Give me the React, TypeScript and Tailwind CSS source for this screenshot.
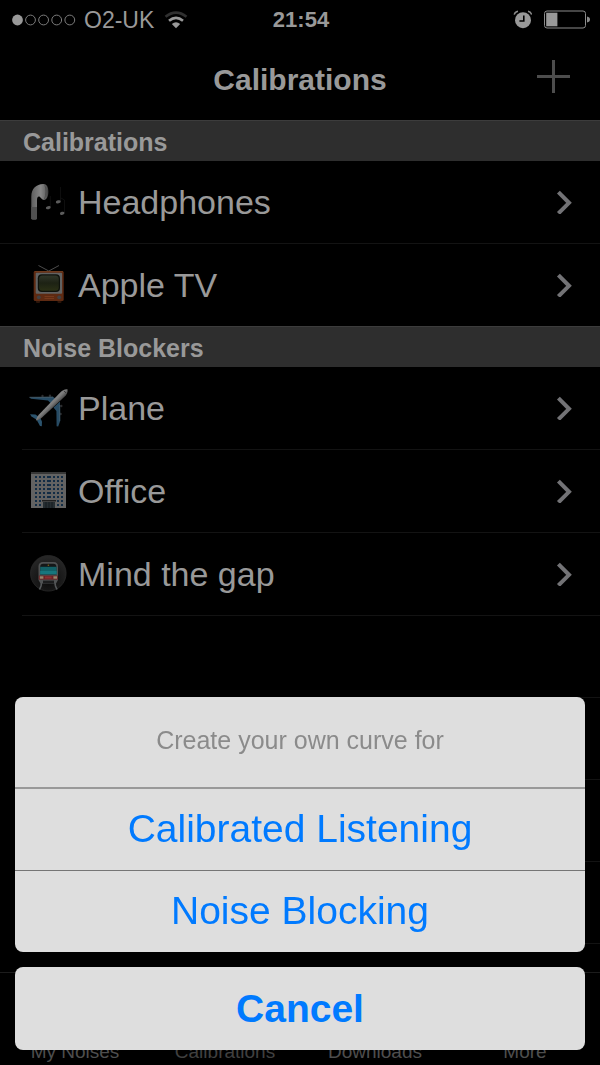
import type { ReactNode } from "react";

interface Curve {
    name: string;
    icon: ReactNode;
}

interface CurveSectionProps {
    title: string;
    curves: Curve[];
    inset?: boolean;
}

function EarbudIcon() {
    return (
        <svg viewBox="0 0 40 40" className="w-10 h-10 shrink-0" aria-hidden="true">
            <defs>
                <linearGradient id="bud" x1="0" x2="1" y1="0" y2="0">
                    <stop offset="0" stopColor="#5e5e5e" />
                    <stop offset="0.55" stopColor="#868686" />
                    <stop offset="0.8" stopColor="#6a6a6a" />
                    <stop offset="1" stopColor="#3a3a3a" />
                </linearGradient>
            </defs>
            <path d="M3.3 37V14.5C3.3 6.5 8.5 2.2 15 2C18.8 1.9 20.4 5 20.4 9.5C20.4 14.2 18.8 18 16 18C13.6 18 13 15.6 11.4 14.6C9.8 14.2 9 15.8 9 18.5V37Q6 38.2 3.3 37Z" fill="url(#bud)" />
            <path d="M3.3 25H9V37Q6 38.2 3.3 37Z" fill="#505050" />
            <path d="M16.8 3.2C18.4 6 18.4 13 16.4 17.4" stroke="#484848" strokeWidth="0.8" fill="none" />
            <g stroke="#0e0e0e" strokeWidth="1" fill="none">
                <path d="M22.3 25V14" />
                <path d="M32.5 19.5V5" />
                <path d="M36.5 31V18L33 16" />
            </g>
            <g fill="#5c5c5c">
                <ellipse cx="20.3" cy="25.7" rx="2.5" ry="1.5" transform="rotate(-15 20.3 25.7)" />
                <ellipse cx="30.3" cy="19.8" rx="2.5" ry="1.5" transform="rotate(-15 30.3 19.8)" />
                <ellipse cx="34.2" cy="31.3" rx="2.3" ry="1.5" transform="rotate(-15 34.2 31.3)" />
            </g>
        </svg>
    );
}

function TelevisionIcon() {
    return (
        <svg viewBox="0 0 40 40" className="w-10 h-10 shrink-0" aria-hidden="true">
            <defs>
                <linearGradient id="screen" x1="0" x2="0" y1="0" y2="1">
                    <stop offset="0" stopColor="#303629" />
                    <stop offset="0.5" stopColor="#1d2214" />
                    <stop offset="1" stopColor="#2a3015" />
                </linearGradient>
            </defs>
            <path d="M10.5 0.5L20.8 6L31 0.5" stroke="#4c4c4c" strokeWidth="1" fill="none" />
            <rect x="8" y="34" width="4" height="4" rx="1" fill="#2c150a" />
            <rect x="29.5" y="34" width="4" height="4" rx="1" fill="#2c150a" />
            <rect x="5.7" y="6" width="30" height="30" rx="1.5" fill="#5e2a12" />
            <path d="M6.5 6.6H35" stroke="#74401f" strokeWidth="0.8" />
            <rect x="7.7" y="7.8" width="26.4" height="21" rx="1" fill="#616262" />
            <rect x="9.8" y="9.3" width="22.2" height="17.6" rx="4" fill="#0e120c" />
            <rect x="11" y="10.5" width="19.8" height="15.2" rx="3.5" fill="url(#screen)" />
            <circle cx="10.8" cy="32.3" r="1.9" fill="#3f4043" />
            <circle cx="31.2" cy="32.3" r="1.9" fill="#3f4043" />
            <path d="M16.5 31.5H26M16.5 33.5H26" stroke="#7b3d1f" strokeWidth="0.8" />
        </svg>
    );
}

function PlaneIcon() {
    return (
        <svg viewBox="0 0 40 40" className="w-10 h-10 shrink-0" aria-hidden="true">
            <defs>
                <linearGradient id="fuselage" gradientUnits="userSpaceOnUse" x1="20" y1="13" x2="27" y2="20">
                    <stop offset="0" stopColor="#909090" />
                    <stop offset="0.5" stopColor="#7a7a7a" />
                    <stop offset="1" stopColor="#383838" />
                </linearGradient>
            </defs>
            <g fill="#2c2c2e">
                <circle cx="14.5" cy="8" r="1.2" />
                <circle cx="22" cy="7.8" r="1.2" />
                <circle cx="33.3" cy="18" r="1.2" />
                <circle cx="32.6" cy="26" r="1.2" />
            </g>
            <path d="M1.2 9.2L25 8.8L28 11L23 15.5L20 12.6L3 10.8Z" fill="#274b64" />
            <path d="M1.5 9.3L25 9.2" stroke="#4b5d67" strokeWidth="0.8" />
            <path d="M25.5 19.5L32 13.5L32.2 33L30.2 38.6L28.6 38.2L28.4 23Z" fill="#274b64" />
            <path d="M31.7 17V33" stroke="#42606f" strokeWidth="0.8" />
            <path d="M2 26.3L7.5 26.6L12.5 30L9 32L3.5 28.6Z" fill="#2b536d" />
            <path d="M9 32.5L12 29.5L14 33.5L13.8 38.3L12 38Z" fill="#2b536d" />
            <path d="M39.6 1.4C40 4.2 38.6 6.6 36.5 8.8L14 29.5C12 31.2 10 32.4 8 32.6C8.2 30.8 9.4 28.6 11 26.6L31.5 5.2C34 2.6 37 1 39.6 1.4Z" fill="url(#fuselage)" />
            <path d="M35.8 2.8L38.2 5" stroke="#292929" strokeWidth="0.8" />
        </svg>
    );
}

const windowColumns = [7, 11, 15, 19, 21, 25, 29, 33];

function OfficeIcon() {
    return (
        <svg viewBox="0 0 40 40" className="w-10 h-10 shrink-0" aria-hidden="true">
            <rect x="3" y="1" width="35" height="36" fill="#626262" />
            <rect x="3" y="1" width="35" height="2" fill="#373737" />
            {[0, 1, 2, 3, 4, 5, 6, 7].map((row) =>
                windowColumns
                    .filter((x) => row < 6 || x < 12 || x > 26)
                    .map((x) => (
                        <rect key={`${row}-${x}`} x={x} y={5 + row * 4} width="2" height="2" fill="#122c45" />
                    ))
            )}
            <rect x="14" y="29" width="14" height="1.5" fill="#1f1f1f" />
            <rect x="15" y="31" width="12" height="6" fill="#262e32" />
            <path d="M18 31V37M21 31V37M24 31V37" stroke="#11171a" strokeWidth="0.8" />
        </svg>
    );
}

function MetroIcon() {
    return (
        <svg viewBox="0 0 40 40" className="w-10 h-10 shrink-0" aria-hidden="true">
            <defs>
                <radialGradient id="tunnel" cx="0.5" cy="0.7" r="0.65">
                    <stop offset="0" stopColor="#0a0a0a" />
                    <stop offset="1" stopColor="#262626" />
                </radialGradient>
            </defs>
            <circle cx="20.3" cy="19.3" r="17.8" fill="url(#tunnel)" stroke="#282828" strokeWidth="0.8" />
            <path d="M13.5 29L13 32L11.5 35.5M27 29L27.5 32L29 35.5" stroke="#55585a" strokeWidth="1.6" fill="none" />
            <path d="M10.5 26V12.5Q10.5 8 15 8H25.5Q30 8 30 12.5V26L28 29.5H12.5Z" fill="#505253" />
            <path d="M12.2 12.8Q12.2 9.8 15.2 9.8H25.3Q28.4 9.8 28.4 12.8V20.5H12.2Z" fill="#151718" />
            <rect x="12.2" y="12.8" width="16.4" height="7.5" fill="#126167" />
            <rect x="12.2" y="17" width="16.4" height="3.3" fill="#17767d" />
            <rect x="19.7" y="10.6" width="1.4" height="1.3" fill="#7d6217" />
            <rect x="10.8" y="21.6" width="19" height="4" fill="#6c2224" />
            <rect x="11.8" y="22.3" width="3.6" height="2.4" fill="#94866d" />
            <rect x="25.4" y="22.3" width="3.6" height="2.4" fill="#94866d" />
            <rect x="17" y="22.5" width="6.6" height="2" fill="#8c3032" />
            <rect x="15" y="26.6" width="11" height="2.6" fill="#1c1d1e" />
        </svg>
    );
}

function StatusBar() {
    return (
        <div className="grid grid-cols-[1fr_auto_1fr] items-center h-10 pl-3 pr-2.5 text-[#999]">
            <div className="flex items-center gap-2">
                <svg viewBox="0 0 64 12" className="w-16 h-3" aria-hidden="true">
                    <circle cx="5.5" cy="6" r="5.4" fill="#999" />
                    <g fill="none" stroke="#7c7c7c" strokeWidth="1">
                        <circle cx="18.5" cy="6" r="4.9" />
                        <circle cx="31.6" cy="6" r="4.9" />
                        <circle cx="44.7" cy="6" r="4.9" />
                        <circle cx="57.8" cy="6" r="4.9" />
                    </g>
                </svg>
                <span className="text-[23px] leading-none">O2-UK</span>
                <svg viewBox="0 0 24 18" className="w-6 h-[18px] ml-0.5" fill="none" aria-hidden="true">
                    <path d="M1.5 5.8Q12 -2.4 22.5 5.8" stroke="#303030" strokeWidth="2.6" />
                    <path d="M5 9.8Q12 4 19 9.8" stroke="#999" strokeWidth="2.6" />
                    <path d="M7.8 13Q12 9.4 16.2 13L12 17.2Z" fill="#999" />
                </svg>
            </div>
            <span className="text-[22px] leading-none font-bold">21:54</span>
            <div className="flex items-center justify-end gap-2.5">
                <svg viewBox="0 0 20 20" className="w-5 h-5" fill="none" aria-hidden="true">
                    <circle cx="11" cy="10.2" r="8" fill="#999" />
                    <path d="M11.8 5.4V11H7.4" stroke="#000" strokeWidth="1.6" />
                    <path d="M2.2 4.6Q3 1.6 6 1.2M19.6 4.6Q19 1.6 16 1.2" stroke="#8a8a8a" strokeWidth="1.4" />
                </svg>
                <svg viewBox="0 0 48 20" className="w-12 h-5" fill="none" aria-hidden="true">
                    <rect x="2.5" y="1" width="41" height="17" rx="2.5" stroke="#8c8c8c" strokeWidth="1" />
                    <rect x="4.2" y="2.7" width="11.2" height="13.6" fill="#999" />
                    <path d="M45 6.5Q48 7.1 48 9.5Q48 11.9 45 12.5Z" fill="#8c8c8c" />
                </svg>
            </div>
        </div>
    );
}

function CurveSection({ title, curves, inset = false }: CurveSectionProps) {
    return (
        <section>
            <h2 className="h-[41px] flex items-center pl-[23px] pt-[3px] bg-[#2e2e2e] border-t border-[#3c3c3c] text-[25px] leading-none font-bold text-[#999]">
                {title}
            </h2>
            <ul className={inset ? "ml-[22px]" : ""}>
                {curves.map((curve) => (
                    <li key={curve.name} className={inset ? "border-b border-[#131313]" : "border-b border-[#131313] last:border-b-0"}>
                        <a
                            href="#"
                            className={
                                inset
                                    ? "flex items-center gap-2.5 h-[82px] pl-1.5 pr-7 text-[34px] leading-none text-[#999]"
                                    : "flex items-center gap-2.5 h-[82px] pl-7 pr-7 text-[34px] leading-none text-[#999]"
                            }
                        >
                            {curve.icon}
                            <span className="flex-1">{curve.name}</span>
                            <svg viewBox="0 0 16 24" className="w-4 h-6" fill="none" aria-hidden="true">
                                <path d="M2.4 2.2L13 12.8L2.4 23.4" stroke="#737376" strokeWidth="4" />
                            </svg>
                        </a>
                    </li>
                ))}
            </ul>
        </section>
    );
}

function ActionSheet() {
    return (
        <div className="fixed inset-0 flex flex-col justify-end gap-[15px] p-[15px]" role="dialog" aria-labelledby="sheet-title">
            <div className="flex flex-col rounded-lg bg-[#dedede] overflow-hidden">
                <p id="sheet-title" className="h-[90px] flex items-center justify-center pb-1 text-[25px] leading-none text-[#8b8b8b]">
                    Create your own curve for
                </p>
                <button className="h-[83px] border-t-2 border-[#999] pb-0.5 text-[39px] leading-none text-[#007aff]">
                    Calibrated Listening
                </button>
                <button className="h-[82px] border-t border-[#757575] pb-0.5 text-[39px] leading-none text-[#007aff]">
                    Noise Blocking
                </button>
            </div>
            <button className="h-[83px] rounded-lg bg-[#dedede] text-[39px] leading-none font-bold text-[#007aff]">
                Cancel
            </button>
        </div>
    );
}

const calibrations: Curve[] = [
    { name: "Headphones", icon: <EarbudIcon /> },
    { name: "Apple TV", icon: <TelevisionIcon /> },
];

const noiseBlockers: Curve[] = [
    { name: "Plane", icon: <PlaneIcon /> },
    { name: "Office", icon: <OfficeIcon /> },
    { name: "Mind the gap", icon: <MetroIcon /> },
];

const tabs = ["My Noises", "Calibrations", "Downloads", "More"];

export default function App() {
    return (
        <div className="min-h-screen flex flex-col bg-black font-['Liberation_Sans',Arial,sans-serif]">
            <StatusBar />

            {/* Navigation bar */}
            <header className="grid grid-cols-[1fr_auto_1fr] items-center h-20 px-7">
                <h1 className="col-start-2 text-[30px] leading-none font-bold text-[#999]">Calibrations</h1>
                <button aria-label="Add curve" className="justify-self-end pb-2">
                    <svg viewBox="0 0 36 36" className="w-9 h-9" aria-hidden="true">
                        <path d="M17.5 2V35M1 18.5H34" stroke="#4d4d4d" strokeWidth="3" />
                    </svg>
                </button>
            </header>

            <main className="flex-1">
                <CurveSection title="Calibrations" curves={calibrations} />
                <CurveSection title="Noise Blockers" curves={noiseBlockers} inset />
                {/* Unused rows */}
                {[0, 1, 2, 3].map((row) => (
                    <div key={row} className="h-[82px] ml-[22px] border-b border-[#131313]" />
                ))}
            </main>

            {/* Tab bar */}
            <nav className="h-[93px] grid grid-cols-4 items-end pb-[3px] border-t border-[#1c1c1c] text-center text-[19px] leading-5 text-[#4e4e4e]">
                {tabs.map((tab) => (
                    <a key={tab} href="#" className={tab === "Calibrations" ? "text-[#404040]" : ""}>
                        {tab}
                    </a>
                ))}
            </nav>

            <ActionSheet />
        </div>
    );
}
